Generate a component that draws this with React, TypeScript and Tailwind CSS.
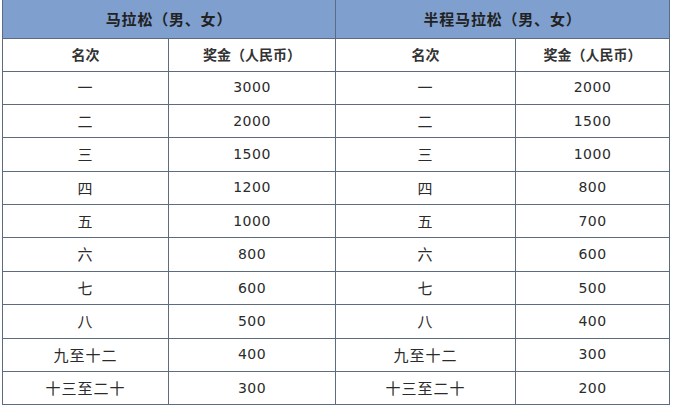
const left = [
  ["一", "3000"],
  ["二", "2000"],
  ["三", "1500"],
  ["四", "1200"],
  ["五", "1000"],
  ["六", "800"],
  ["七", "600"],
  ["八", "500"],
  ["九至十二", "400"],
  ["十三至二十", "300"],
];

const right = ["2000", "1500", "1000", "800", "700", "600", "500", "400", "300", "200"];

const cjk = { fontFamily: '"Noto Sans CJK SC", "DejaVu Sans", sans-serif' };

export default function App() {
  return (
    <div className="w-[679px] h-[411px] bg-white pl-[2px]" style={cjk}>
      <table className="table-fixed border-collapse w-[667px] text-[#2b2b2b]">
        <colgroup>
          <col className="w-[166px]" />
          <col className="w-[167px]" />
          <col className="w-[180px]" />
          <col className="w-[154px]" />
        </colgroup>
        <thead>
          <tr className="h-[38px] bg-[#7f9fcf]">
            <th colSpan={2} className="border-x border-b border-[#5b6b80] text-[15px] font-bold tracking-[0.8px] text-[#222]">
              马拉松（男、女）
            </th>
            <th colSpan={2} className="border-x border-b border-[#5b6b80] text-[15px] font-bold tracking-[0.8px] text-[#222]">
              半程马拉松（男、女）
            </th>
          </tr>
          <tr className="h-[33px]">
            {["名次", "奖金（人民币）", "名次", "奖金（人民币）"].map((t, i) => (
              <th key={i} className="border border-[#5b6b80] text-[14px] font-bold text-[#333]">
                {t}
              </th>
            ))}
          </tr>
        </thead>
        <tbody>
          {left.map(([rank, amt], i) => (
            <tr key={i} className="h-[33.4px]">
              <td className="border border-[#5b6b80] text-center text-[15px] tracking-[1px]">{rank}</td>
              <td className="border border-[#5b6b80] text-center text-[14px] tracking-[0.5px]" style={{ fontFamily: '"DejaVu Sans", sans-serif' }}>{amt}</td>
              <td className="border border-[#5b6b80] text-center text-[15px] tracking-[1px]">{rank}</td>
              <td className="border border-[#5b6b80] text-center text-[14px] tracking-[0.5px]" style={{ fontFamily: '"DejaVu Sans", sans-serif' }}>{right[i]}</td>
            </tr>
          ))}
        </tbody>
      </table>
    </div>
  );
}
